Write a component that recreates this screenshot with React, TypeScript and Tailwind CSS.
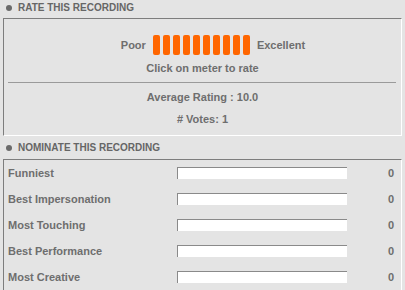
const nominations = [
  'Funniest',
  'Best Impersonation',
  'Most Touching',
  'Best Performance',
  'Most Creative',
]

const SectionHeader = ({ title, className }: { title: string; className: string }) => (
  <div className={`flex items-center pl-[6px] ${className}`}>
    <span className="w-[6px] h-[6px] rounded-full bg-[#6a6a6a]" />
    <span className="ml-[6px] text-[10px] font-bold text-[#666666] leading-[12px]">{title}</span>
  </div>
)

const App = () => {
  return (
    <div className="w-[405px] h-[290px] overflow-hidden bg-[#e4e4e4] font-['Liberation_Sans',Arial,sans-serif] text-[#6e6e6e]">
      <SectionHeader title="RATE THIS RECORDING" className="h-[18px] pb-[3px]" />

      <div className="mx-[3px] h-[118px] border-t border-l border-[#7d7d7d] border-r-white border-b-white border-r border-b">
        <div className="pt-[16px] flex items-center justify-center pl-[21px] h-[36px] text-[11px] font-bold">
          <span>Poor</span>
          <div className="flex gap-[3px] mx-[7px] cursor-pointer">
            {Array.from({ length: 10 }).map((_, i) => (
              <span key={i} className="w-[7px] h-[20px] rounded-[2px] bg-[#ff6600]" />
            ))}
          </div>
          <span>Excellent</span>
        </div>

        <p className="mt-[6px] h-[14px] leading-[14px] text-center text-[11px] font-bold">Click on meter to rate</p>

        <div className="mt-[7px] ml-[4px] mr-[5px] h-px bg-[#9a9a9a]" />

        <p className="mt-[7px] h-[14px] leading-[14px] text-center text-[11px] font-bold">Average Rating : 10.0</p>
        <p className="mt-[8px] h-[14px] leading-[14px] text-center text-[11px] font-bold"># Votes: 1</p>
      </div>

      <SectionHeader title="NOMINATE THIS RECORDING" className="h-[23px]" />

      <div className="mx-[3px] h-[200px] border-t border-l border-[#7d7d7d] border-r border-r-white">
        {nominations.map((name) => (
          <div key={name} className="flex items-center h-[26px] pl-[4px] pr-[7px] text-[11px] font-bold">
            <span className="w-[169px] shrink-0">{name}</span>
            <div className="w-[170px] h-[12px] bg-white border-t border-l border-[#8a8a8a] border-r-white border-b-white" />
            <span className="flex-1 text-right">0</span>
          </div>
        ))}
      </div>
    </div>
  )
}

export default App
